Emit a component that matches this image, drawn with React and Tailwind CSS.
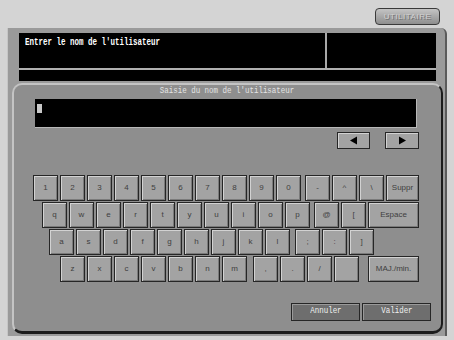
import React from "react";

const mono = { fontFamily: '"Liberation Mono", "DejaVu Sans Mono", monospace' };
const sans = { fontFamily: '"Liberation Sans", Arial, sans-serif' };

function Key({ label, w = "w-[25px]" }) {
  return (
    <div
      className={`${w} h-[26px] shrink-0 bg-[#a3a3a3] border border-[#262626] shadow-[inset_1px_1px_0_#d2d2d2,inset_-1px_-1px_0_#7a7a7a] flex items-center justify-center text-[8px] text-[#404040] leading-none`}
      style={sans}
    >
      {label}
    </div>
  );
}

function Row({ pl, children }) {
  return <div className={`flex h-[26px] ${pl}`}>{children}</div>;
}

export default function App() {
  const row1 = ["1", "2", "3", "4", "5", "6", "7", "8", "9", "0"];
  const row2 = ["q", "w", "e", "r", "t", "y", "u", "i", "o", "p"];
  const row3 = ["a", "s", "d", "f", "g", "h", "j", "k", "l"];
  const row4 = ["z", "x", "c", "v", "b", "n", "m"];
  return (
    <div className="w-[454px] h-[340px] bg-[#d4d4d4] flex flex-col overflow-hidden">
      {/* top bar */}
      <div className="h-[28px] flex justify-end items-start pt-[8px] pr-[14px]">
        <div
          className="w-[65px] h-[17px] rounded-[4px] border border-[#3a3a3a] bg-gradient-to-b from-[#c4c4c4] to-[#8e8e8e] flex items-center justify-center text-[8px] tracking-[0.5px] text-[#cfcfcf] [text-shadow:_1px_1px_0_#707070]"
          style={sans}
        >
          UTILITAIRE
        </div>
      </div>

      {/* outer panel */}
      <div className="ml-[7px] w-[440px] h-[308px] bg-[#9a9a9a] border-l-[1px] border-l-[#c6c6c6] border-r-2 border-r-[#5a5a5a] rounded-tr-[6px] flex flex-col">
        <div className="ml-[11px] mt-[5px] w-[417px] flex flex-col">
          <div className="h-[35px] flex bg-black">
            <div className="w-[306px] pl-[6px] pt-[1px] leading-[11px] whitespace-nowrap">
              <span
                className="inline-block origin-left scale-x-[0.75] text-[10px] font-bold text-white"
                style={mono}
              >
                Entrer le nom de l'utilisateur
              </span>
            </div>
            <div className="w-[2px] bg-[#a8a8a8]" />
            <div className="flex-1" />
          </div>
          <div className="h-[2px] bg-[#b0b0b0]" />
          <div className="h-[11px] bg-black" />
        </div>

        {/* dialog */}
        <div className="ml-[4px] mt-[2px] w-[431px] h-[251px] rounded-[10px] bg-[#8e8e8e] border-l-2 border-t-2 border-l-[#c4c4c4] border-t-[#c4c4c4] border-r-2 border-r-[#1c1c1c] border-b-[3px] border-b-[#1c1c1c] flex flex-col">
          <div className="h-[12px] leading-[12px] flex justify-center whitespace-nowrap">
            <span
              className="inline-block scale-x-[0.83] text-[9px] text-[#e4e4e4]"
              style={mono}
            >
              Saisie du nom de l'utilisateur
            </span>
          </div>
          <div className="ml-[21px] mt-[2px] w-[382px] h-[29px] bg-black border-b border-r border-[#b8b8b8] pl-[2px] pt-[5px]">
            <div className="w-[5px] h-[9px] bg-[#c8c8c8]" />
          </div>
          <div className="mt-[4px] h-[17px] flex justify-end pr-[22px] gap-[15px]">
            <div className="w-[33px] h-[17px] bg-[#a3a3a3] border border-[#262626] shadow-[inset_1px_1px_0_#d2d2d2] flex items-center justify-center">
              <svg width="9" height="9" viewBox="0 0 9 9">
                <path d="M1 4.5 L8 0.5 L8 8.5 Z" fill="#000" />
              </svg>
            </div>
            <div className="w-[34px] h-[17px] bg-[#a3a3a3] border border-[#262626] shadow-[inset_1px_1px_0_#d2d2d2] flex items-center justify-center">
              <svg width="9" height="9" viewBox="0 0 9 9">
                <path d="M8 4.5 L1 0.5 L1 8.5 Z" fill="#000" />
              </svg>
            </div>
          </div>

          {/* keyboard */}
          <div className="mt-[26px] flex flex-col gap-[1px]">
            <Row pl="pl-[19px]">
              <div className="flex gap-[2px]">
                {row1.map((k) => (
                  <Key key={k} label={k} />
                ))}
              </div>
              <div className="flex gap-[2px] ml-[4px]">
                <Key label="-" />
                <Key label="^" />
                <Key label="\" />
                <Key label="Suppr" w="w-[33px]" />
              </div>
            </Row>
            <Row pl="pl-[28px]">
              <div className="flex gap-[2px]">
                {row2.map((k) => (
                  <Key key={k} label={k} />
                ))}
              </div>
              <div className="flex gap-[2px] ml-[4px]">
                <Key label="@" />
                <Key label="[" />
                <Key label="Espace" w="w-[51px]" />
              </div>
            </Row>
            <Row pl="pl-[35px]">
              <div className="flex gap-[2px]">
                {row3.map((k) => (
                  <Key key={k} label={k} />
                ))}
              </div>
              <div className="flex gap-[2px] ml-[5px]">
                <Key label=";" />
                <Key label=":" />
                <Key label="]" />
              </div>
            </Row>
            <Row pl="pl-[46px]">
              <div className="flex gap-[2px]">
                {row4.map((k) => (
                  <Key key={k} label={k} />
                ))}
              </div>
              <div className="flex gap-[2px] ml-[6px]">
                <Key label="," />
                <Key label="." />
                <Key label="/" />
                <Key label="" />
              </div>
              <div className="ml-[9px]">
                <Key label="MAJ./min." w="w-[51px]" />
              </div>
            </Row>
          </div>

          {/* bottom buttons */}
          <div className="mt-[21px] flex justify-end pr-[10px] gap-[2px]">
            <div className="w-[69px] h-[18px] bg-[#6e6e6e] border border-[#262626] shadow-[inset_1px_1px_0_#9a9a9a] flex items-center justify-center whitespace-nowrap">
              <span className="inline-block scale-x-[0.83] text-[9px] text-[#f0f0f0]" style={mono}>
                Annuler
              </span>
            </div>
            <div className="w-[69px] h-[18px] bg-[#6e6e6e] border border-[#262626] shadow-[inset_1px_1px_0_#9a9a9a] flex items-center justify-center whitespace-nowrap">
              <span className="inline-block scale-x-[0.83] text-[9px] text-[#f0f0f0]" style={mono}>
                Valider
              </span>
            </div>
          </div>
        </div>
      </div>
    </div>
  );
}
